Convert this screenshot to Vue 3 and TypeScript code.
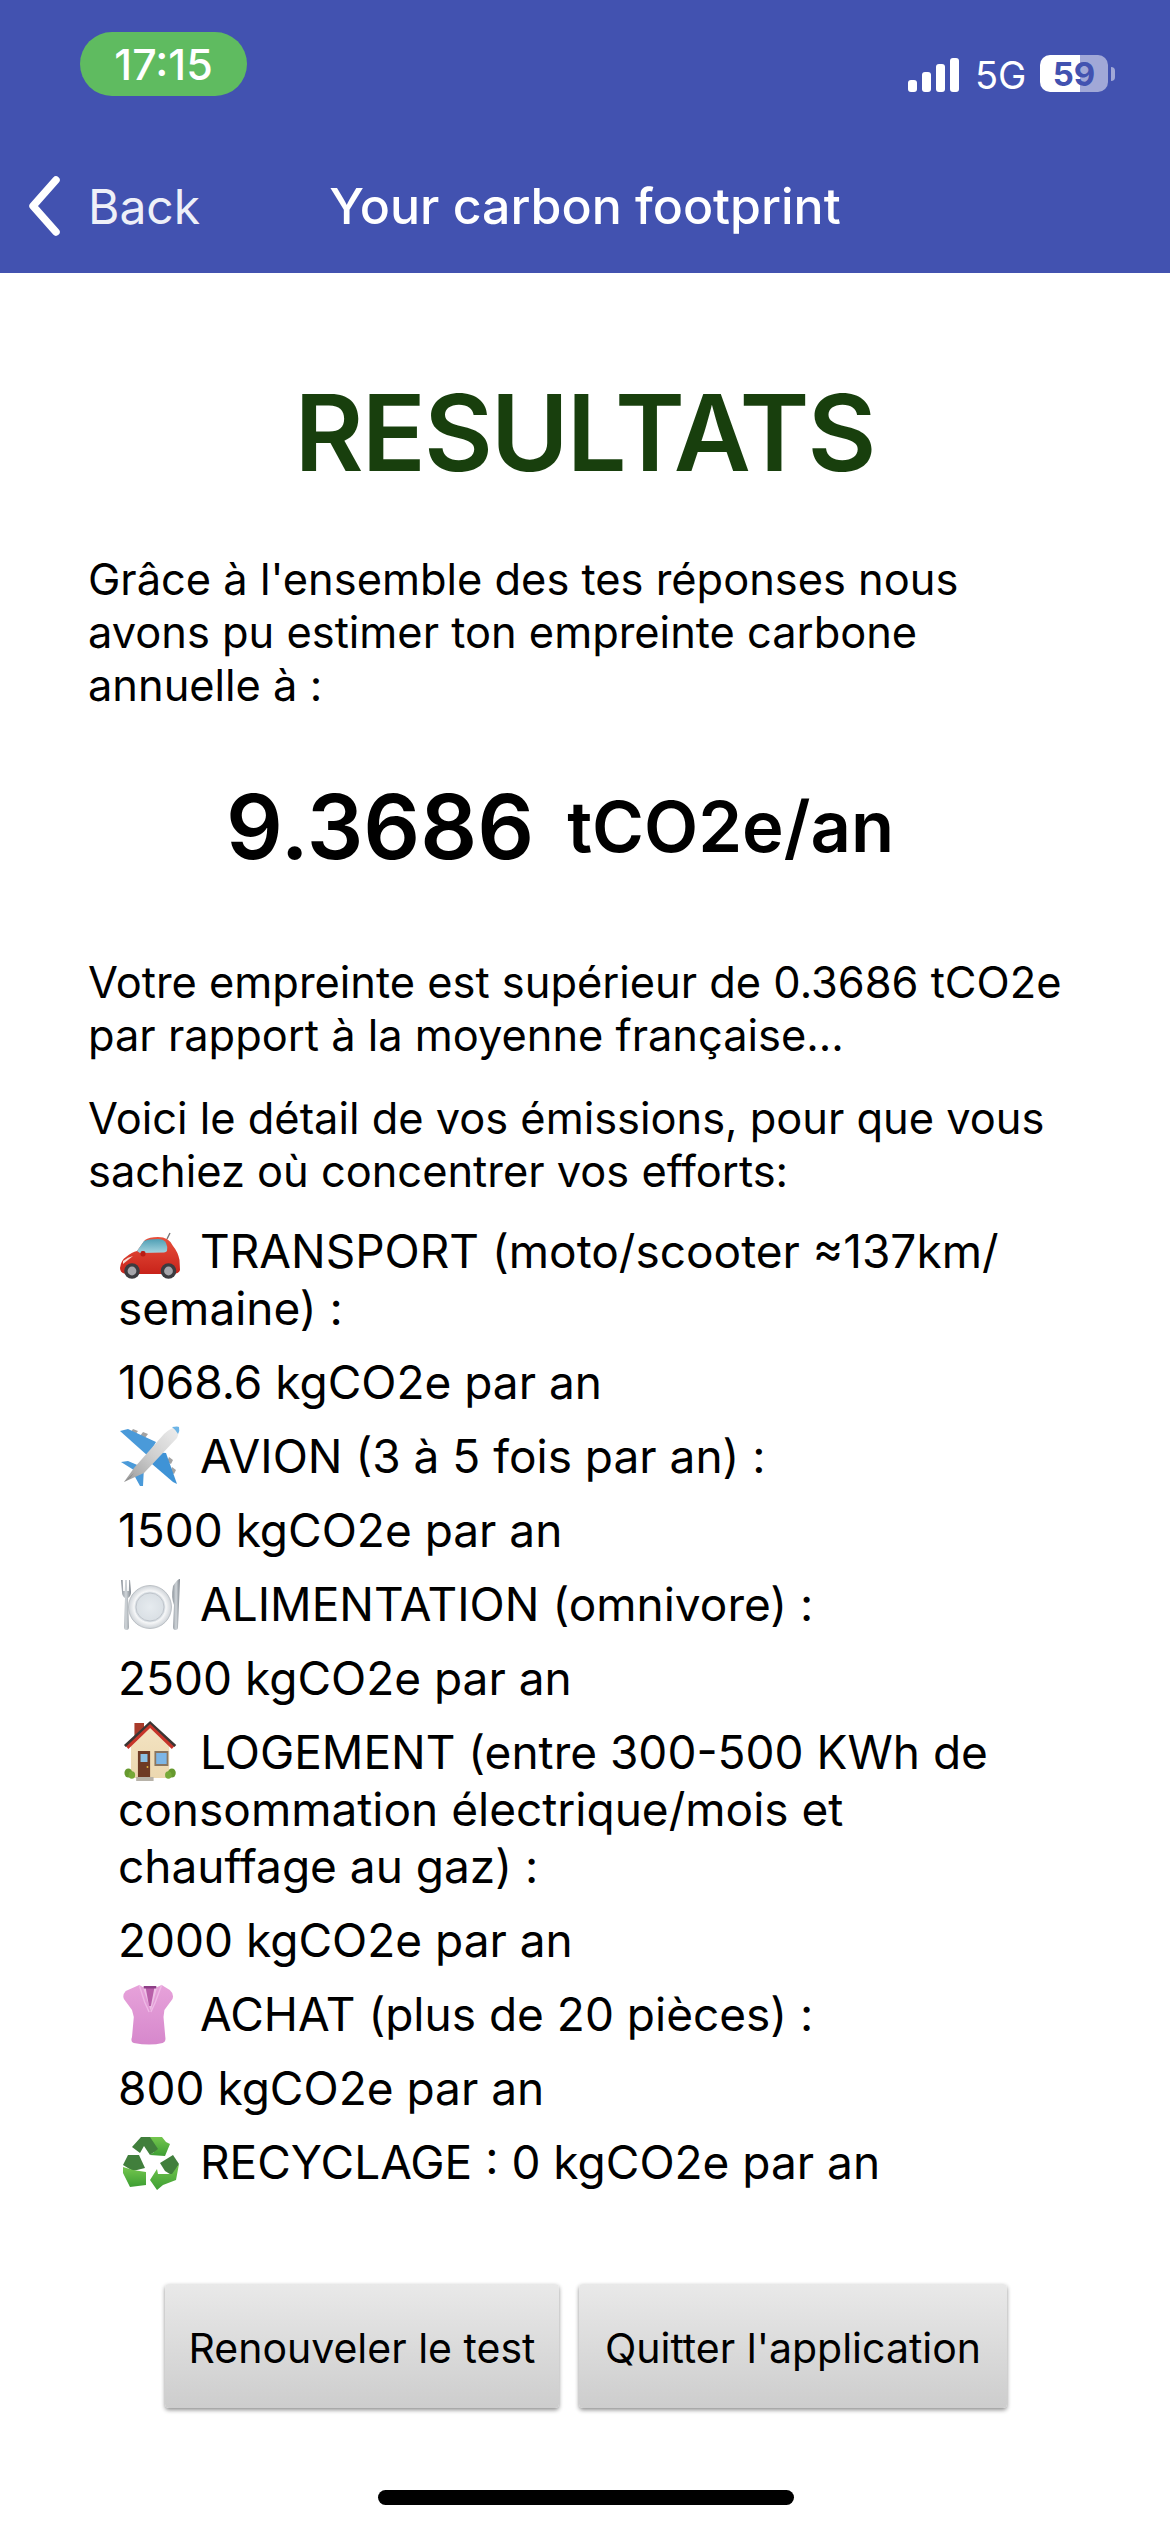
<script setup lang="ts">
interface Item {
  icon: string
  label: string
  value?: string
}
const items: Item[] = [
  { icon: 'car', label: 'TRANSPORT (moto/scooter ≈137km/ semaine) :', value: '1068.6 kgCO2e par an' },
  { icon: 'plane', label: 'AVION (3 à 5 fois par an) :', value: '1500 kgCO2e par an' },
  { icon: 'plate', label: 'ALIMENTATION (omnivore) :', value: '2500 kgCO2e par an' },
  { icon: 'house', label: 'LOGEMENT (entre 300-500 KWh de consommation électrique/mois et chauffage au gaz) :', value: '2000 kgCO2e par an' },
  { icon: 'shirt', label: 'ACHAT (plus de 20 pièces) :', value: '800 kgCO2e par an' },
  { icon: 'recycle', label: 'RECYCLAGE : 0 kgCO2e par an' },
]
const bars: number[] = [12, 20, 28, 34]
</script>

<template>
  <div class="page">
    <header class="top">
      <div class="status">
        <div class="pill">17:15</div>
        <div class="status-right">
          <div class="signal">
            <i v-for="h in bars" :key="h" class="bar" :style="{ height: h + 'px' }"></i>
          </div>
          <span class="net">5G</span>
          <div class="battery"><span>59</span></div>
          <i class="nub"></i>
        </div>
      </div>
      <nav class="nav">
        <div class="back">
          <svg class="chev" width="34" height="60" viewBox="0 0 34 60">
            <path d="M30 4 L7 30 L30 56" fill="none" stroke="#fff" stroke-width="7.500" stroke-linecap="round" stroke-linejoin="round" />
          </svg>
          <span>Back</span>
        </div>
        <div class="title">Your carbon footprint</div>
      </nav>
    </header>

    <main class="content">
      <h1>RESULTATS</h1>
      <p class="lead">Grâce à l'ensemble des tes réponses nous avons pu estimer ton empreinte carbone annuelle à :</p>
      <div class="score"><span class="num">9.3686</span><span class="unit">tCO2e/an</span></div>
      <p class="para">Votre empreinte est supérieur de 0.3686 tCO2e par rapport à la moyenne française...</p>
      <p class="para second">Voici le détail de vos émissions, pour que vous sachiez où concentrer vos efforts:</p>
      <ul class="list">
        <li v-for="it in items" :key="it.icon">
          <div class="label">
            <svg class="emoji" viewBox="0 0 60 60" width="60" height="60">
              <template v-if="it.icon === 'car'">
                <defs>
                  <linearGradient id="carBody" x1="0" y1="0" x2="0" y2="1"><stop offset="0" stop-color="#e8503c" /><stop offset="1" stop-color="#c8231a" /></linearGradient>
                  <linearGradient id="carGlass" x1="0" y1="0" x2="0" y2="1"><stop offset="0" stop-color="#4f9fb5" /><stop offset="1" stop-color="#a6d4df" /></linearGradient>
                </defs>
                <g transform="translate(0 11)">
                  <path d="M50 1 L47 7" stroke="#777" stroke-width="1.400" />
                  <path d="M0 36 Q1 28 6 25 Q12 20 17 19 L25 8 Q29 5 38 5 Q49 5 53 14 Q58 20 59.500 28 L60 38 Q59 42 52 42 L8 42 Q0 42 0 36Z" fill="url(#carBody)" />
                  <path d="M17 19 L24 9 Q28 7 38 7 Q44 7 46 11 Q48 15 47 19 Q46 20 44 20.500 L20 21Z" fill="url(#carGlass)" />
                  <rect x="20.500" y="19" width="5" height="5.500" rx="2" fill="#b91d14" />
                  <path d="M3 29 Q8 25 13 24 L3 32Z" fill="#f7dfd6" />
                  <circle cx="12" cy="39" r="7.800" fill="#3b3b3f" />
                  <circle cx="12" cy="39" r="4.400" fill="#a5a5aa" />
                  <circle cx="48.500" cy="39" r="7.800" fill="#3b3b3f" />
                  <circle cx="48.500" cy="39" r="4.400" fill="#a5a5aa" />
                </g>
              </template>
              <template v-else-if="it.icon === 'plane'">
                <defs>
                  <linearGradient id="planeBody" x1="1" y1="0" x2="0" y2="1"><stop offset="0" stop-color="#eeeeee" /><stop offset="0.500" stop-color="#cfcfcf" /><stop offset="1" stop-color="#9a9a9a" /></linearGradient>
                </defs>
                <path d="M13 3 L10 7 L15 9 L18 5Z M23 6 L20 10 L25 12 L28 8Z M53 34 L49 31 L47 36 L51 38Z M56 44 L52 41 L50 46 L54 48Z" fill="#a2a2a2" />
                <path d="M0 5 L8 3 L36 16 L28 30 Q10 14 0 5Z" fill="#4a9ad9" />
                <path d="M34 26 L46 27 L57 58 L53 56 L32 38Z" fill="#3f93d6" />
                <path d="M1 36 L8 35 L22 41 L17 46Z M14 49 L24 41 L23 60 L20 60Z" fill="#4a9ad9" />
                <path d="M4 56 L14 42 L44 8 Q50 2 57 1 Q60 6 57 12 L24 47 Z" fill="url(#planeBody)" />
                <path d="M4 56 L14 47 L10 52Z" fill="#888" />
                <path d="M52 1 Q58 0 59 1 Q60 5 58 8 Q56 4 52 1Z" fill="#6cb4e6" />
              </template>
              <template v-else-if="it.icon === 'plate'">
                <defs>
                  <linearGradient id="metal" x1="0" y1="0" x2="1" y2="0"><stop offset="0" stop-color="#8b929a" /><stop offset="0.500" stop-color="#d0d5d9" /><stop offset="1" stop-color="#7d848c" /></linearGradient>
                  <radialGradient id="plateG"><stop offset="0" stop-color="#e6ebef" /><stop offset="0.680" stop-color="#d9dfe4" /><stop offset="0.740" stop-color="#f6f7f8" /><stop offset="1" stop-color="#cdd2d7" /></radialGradient>
                </defs>
                <g transform="translate(0 4)">
                  <path d="M1 2 L2 14 Q2 18 5 20 L4 49 Q4 52 6.500 52 Q9 52 9 49 L8 20 Q11 18 11 14 L10 2 L9.200 2 L8.800 13 L7.200 13 L6.800 2 L5.200 2 L4.800 13 L3.200 13 L2.800 2Z" fill="url(#metal)" />
                  <circle cx="30" cy="29" r="21.500" fill="url(#plateG)" stroke="#aab0b6" stroke-width="0.700" />
                  <circle cx="30" cy="29" r="14" fill="none" stroke="#bcc2c8" stroke-width="0.900" />
                  <path d="M53 8 Q58 0 60 1 L59 26 L58 49 Q58 52 55.500 52 Q53 52 53 49 L54 27 Q51 20 53 8Z" fill="url(#metal)" />
                </g>
              </template>
              <template v-else-if="it.icon === 'house'">
                <defs>
                  <linearGradient id="wall" x1="0" y1="0" x2="0" y2="1"><stop offset="0" stop-color="#f3e3c2" /><stop offset="1" stop-color="#ecd8b0" /></linearGradient>
                </defs>
                <g transform="translate(4 0) scale(0.870 1)">
                  <rect x="12" y="1" width="11" height="18" fill="#a83a2a" />
                  <path d="M8 24 L30 5 L52 24 L52 56 L8 56Z" fill="url(#wall)" />
                  <path d="M2 24 L30 1 L58 24 L55 27 L30 6 L5 27Z" fill="#c7352a" />
                  <path d="M0 23 L30 -1 L60 23 L58 25 L30 2 L2 25Z" fill="#3b3533" />
                  <rect x="16" y="29" width="14" height="26" fill="#6e3a25" />
                  <rect x="19" y="32" width="8" height="8" fill="#8cc0e4" />
                  <circle cx="27" cy="45" r="1.100" fill="#e3b43c" />
                  <rect x="35" y="29" width="16" height="15" fill="#8a7660" />
                  <rect x="37" y="31" width="12" height="11" fill="#7db6e6" />
                  <rect x="14" y="55" width="20" height="4" fill="#b7b2a8" />
                  <circle cx="5" cy="51" r="4.500" fill="#66992e" />
                  <circle cx="9" cy="53" r="3.800" fill="#76a938" />
                  <circle cx="55" cy="51" r="4.500" fill="#66992e" />
                  <circle cx="51" cy="53" r="3.800" fill="#76a938" />
                </g>
              </template>
              <template v-else-if="it.icon === 'shirt'">
                <defs>
                  <linearGradient id="blouse" x1="0" y1="0" x2="0" y2="1"><stop offset="0" stop-color="#e7a2da" /><stop offset="1" stop-color="#d688cc" /></linearGradient>
                </defs>
                <g transform="translate(3 0) scale(0.900 1)">
                  <path d="M18 1 L22 3 L38 3 L43 1 L52 6 Q57 10 55 15 L46 26 L45 33 L47 53 Q48 58 44 59 Q30 62 12 59 Q8 58 10 53 L12 33 L10 26 L1 15 Q-1 11 3 7Z" fill="url(#blouse)" />
                  <path d="M22 3 L38 3 L31 27 Z" fill="#fff" opacity="0.350" />
                  <path d="M25 3 L35 3 L31 22 L29 22Z" fill="#b85fa9" />
                  <rect x="23" y="2" width="14" height="2.500" fill="#8e3f87" />
                  <path d="M18 1 L24 18 L29 28 M43 1 L36 18 L31 28" stroke="#efb9e6" stroke-width="1.500" fill="none" />
                </g>
              </template>
              <template v-else>
                <defs>
                  <linearGradient id="rec" x1="0" y1="0" x2="0" y2="1"><stop offset="0" stop-color="#74c64e" /><stop offset="1" stop-color="#3d9e33" /></linearGradient>
                </defs>
                <g transform="translate(0 4)">
                  <path d="M30 1 L42 1 L46 6 L50 8 L45 20 L30 19 L34 16 L29 8Z" fill="url(#rec)" />
                  <path d="M12 11 L21 1 L30 1 L38 13 L30 19 L24 10 L20 17Z" fill="#417f3c" />
                  <path d="M3 29 L8 19 L19 19 L25 32 L13 35Z" fill="#417f3c" />
                  <path d="M3 31 L13 34 L26 36 L26 49 L10 51 L3 37Z" fill="url(#rec)" />
                  <path d="M40 27 L53 19 L59 28 L53 40 L45 35Z" fill="#417f3c" />
                  <path d="M59 28 L56 44 L43 49 L37 54 L30 44 L37 33 L38 38 L52 38Z" fill="url(#rec)" />
                </g>
              </template>
            </svg>
            <span>{{ it.label }}</span>
          </div>
          <div v-if="it.value" class="value">{{ it.value }}</div>
        </li>
      </ul>
      <div class="actions">
        <button class="btn first" type="button"><span>Renouveler le test</span></button>
        <button class="btn second-btn" type="button"><span>Quitter l'application</span></button>
      </div>
      <div class="home"></div>
    </main>
  </div>
</template>

<style scoped>
.page {
  width: 1170px;
  height: 2532px;
  overflow: hidden;
  background: #fff;
  color: #000;
  font-family: Inter, "Liberation Sans", sans-serif;
  display: flex;
  flex-direction: column;
}
.top {
  background: #4252b0;
  height: 273px;
  color: #fff;
  box-sizing: border-box;
  flex: none;
}
.status {
  height: 140px;
  box-sizing: border-box;
  padding: 32px 55px 0 80px;
  display: flex;
  justify-content: space-between;
  align-items: flex-start;
}
.pill {
  width: 167px;
  height: 64px;
  border-radius: 32px;
  background: #5fbb60;
  display: flex;
  align-items: center;
  justify-content: center;
  font-size: 43px;
  font-weight: 500;
}
.status-right {
  display: flex;
  align-items: center;
  margin-top: 23px;
  height: 37px;
}
.signal {
  display: flex;
  align-items: flex-end;
  gap: 5px;
  height: 34px;
  width: 51px;
  margin-top: 3px;
}
.bar {
  display: block;
  width: 9px;
  background: #fff;
  border-radius: 3px;
}
.net {
  font-size: 38px;
  margin-left: 16px;
  width: 65px;
  line-height: 37px;
  margin-top: 3px;
}
.battery {
  width: 68px;
  height: 37px;
  border-radius: 10px;
  background: linear-gradient(90deg, #fff 0 59%, #a1a8d7 59% 100%);
  display: flex;
  align-items: center;
  justify-content: center;
  color: #4252b0;
  font-size: 33px;
  font-weight: 700;
}
.nub {
  display: block;
  width: 4px;
  height: 14px;
  margin-left: 3px;
  background: #a1a8d7;
  border-radius: 0 4px 4px 0;
}
.nav {
  height: 133px;
  position: relative;
  display: flex;
  align-items: flex-start;
  justify-content: center;
}
.back {
  position: absolute;
  left: 26px;
  top: 36px;
  display: flex;
  align-items: center;
  gap: 28px;
  font-size: 48px;
  font-weight: 400;
  color: #eef0f8;
}
.chev {
  flex: none;
}
.title {
  font-size: 50px;
  font-weight: 500;
  line-height: 60px;
  margin-top: 36px;
}
.content {
  flex: 1;
  padding: 0 89px 0 88px;
  display: flex;
  flex-direction: column;
}
h1 {
  margin: 95px 0 0;
  text-align: center;
  font-size: 106px;
  font-weight: 600;
  line-height: 130px;
  color: #183f0d;
  letter-spacing: -2px;
}
.lead,
.para {
  margin: 0;
  font-size: 43.4px;
  line-height: 53px;
}
.lead {
  margin-top: 55px;
}
.score {
  margin-top: 60px;
  height: 110px;
  display: flex;
  align-items: center;
  margin-left: 138px;
}
.num {
  font-size: 89px;
  font-weight: 600;
  line-height: 110px;
}
.unit {
  font-size: 70.5px;
  font-weight: 600;
  line-height: 110px;
  margin-left: 33px;
}
.para {
  margin-top: 74px;
}
.para.second {
  margin-top: 30px;
}
.list {
  list-style: none;
  margin: 25px 0 0 30px;
  padding: 0 48px 0 0;
  font-size: 46px;
  line-height: 57px;
}
.emoji {
  display: inline-block;
  vertical-align: 7px;
  margin: -20px 20px -20px 2px;
  overflow: visible;
}
.value {
  margin-top: 17px;
}
.list li + li {
  margin-top: 17px;
}
.actions {
  display: flex;
  gap: 20px;
  margin-top: 93px;
  margin-left: 77px;
}
.btn {
  height: 124px;
  border: none;
  border-radius: 4px;
  background: linear-gradient(#e9e9e9, #cdcdcd);
  box-shadow: 0 2px 4px rgba(0, 0, 0, 0.45);
  font-family: inherit;
  font-size: 41px;
  color: #000;
  padding: 3px 0 0;
}
.first {
  width: 394px;
}
.second-btn {
  width: 428px;
}
.home {
  width: 416px;
  height: 15px;
  margin: 82px 0 0 290px;
  border-radius: 8px;
  background: #000;
}
</style>
